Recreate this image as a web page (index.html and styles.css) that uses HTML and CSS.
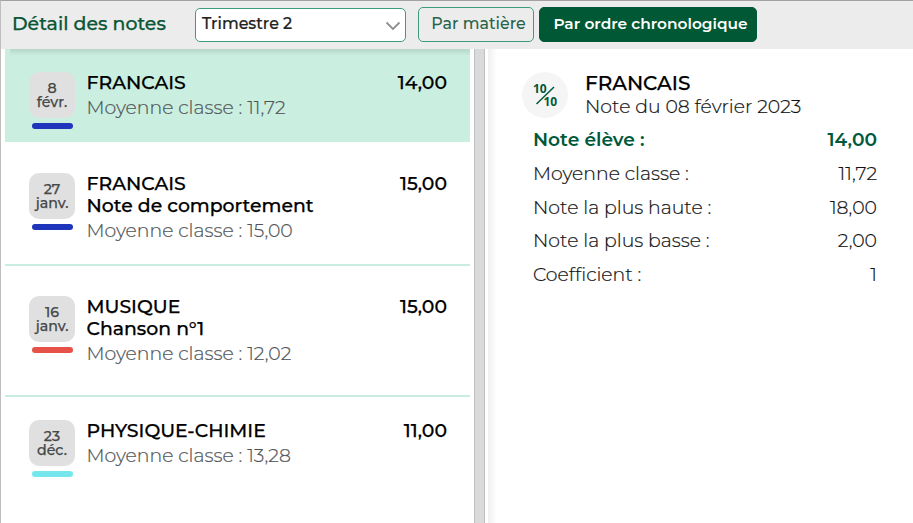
FILE: index.html
```
<!DOCTYPE html>
<html lang="fr">
<head>
<meta charset="utf-8">
<title>Détail des notes</title>
<link rel="stylesheet" href="styles.css">
</head>
<body>
<div class="app">
  <header class="toolbar">
    <h1 class="toolbar-title">Détail des notes</h1>
    <div class="select"><span>Trimestre 2</span>
      <svg class="chevron" width="16" height="10" viewBox="0 0 16 10"><path d="M1.5 1.5 8 8l6.500-6.500" fill="none" stroke="#8f8f8f" stroke-width="1.8"/></svg>
    </div>
    <button class="btn btn-outline">Par matière</button>
    <button class="btn btn-solid">Par ordre chronologique</button>
  </header>
  <main class="content">
    <section class="list">
      <article class="item selected">
        <div class="date"><div class="badge"><span>8</span><span>févr.</span></div><i class="bar blue"></i></div>
        <div class="info"><div class="name">FRANCAIS</div><div class="avg">Moyenne classe : 11,72</div></div>
        <div class="grade">14,00</div>
      </article>
      <article class="item second">
        <div class="date"><div class="badge"><span>27</span><span>janv.</span></div><i class="bar blue"></i></div>
        <div class="info"><div class="name">FRANCAIS</div><div class="name">Note de comportement</div><div class="avg">Moyenne classe : 15,00</div></div>
        <div class="grade">15,00</div>
      </article>
      <article class="item third">
        <div class="date"><div class="badge"><span>16</span><span>janv.</span></div><i class="bar red"></i></div>
        <div class="info"><div class="name">MUSIQUE</div><div class="name">Chanson n°1</div><div class="avg">Moyenne classe : 12,02</div></div>
        <div class="grade">15,00</div>
      </article>
      <article class="item last">
        <div class="date"><div class="badge"><span>23</span><span>déc.</span></div><i class="bar cyan"></i></div>
        <div class="info"><div class="name">PHYSIQUE-CHIMIE</div><div class="avg">Moyenne classe : 13,28</div></div>
        <div class="grade">11,00</div>
      </article>
    </section>
    <div class="splitter"></div>
    <section class="detail">
      <div class="detail-head">
        <svg class="ratio" width="46" height="46" viewBox="0 0 46 46">
          <circle cx="23" cy="23" r="23" fill="#f5f5f5"/>
          <path d="M14.500 32 32 15" stroke="#00593a" stroke-width="1.5"/>
          <text x="11" y="20.500">10</text><text x="21.500" y="34">10</text>
        </svg>
        <div class="detail-text"><h2 class="detail-title">FRANCAIS</h2><div class="detail-date">Note du 08 février 2023</div></div>
      </div>
      <dl class="stats">
        <div class="row strong"><dt>Note élève :</dt><dd>14,00</dd></div>
        <div class="row"><dt>Moyenne classe :</dt><dd>11,72</dd></div>
        <div class="row"><dt>Note la plus haute :</dt><dd>18,00</dd></div>
        <div class="row"><dt>Note la plus basse :</dt><dd>2,00</dd></div>
        <div class="row"><dt>Coefficient :</dt><dd>1</dd></div>
      </dl>
    </section>
  </main>
</div>
</body>
</html>
```
FILE: styles.css
```
* { box-sizing: border-box; }
body { margin: 0; background: #fff; font-family: Montserrat, Inter, "Open Sans", sans-serif; color: #000; white-space: nowrap; font-variant-ligatures: none; }
h1, h2, dl, dd { margin: 0; font-weight: 500; }
.app { width: 913px; height: 523px; border-top: 1px solid #a3a1a3; border-left: 1px solid #bebebe; display: flex; flex-direction: column; overflow: hidden; }
.toolbar { height: 48px; flex: none; background: #ececec; display: flex; align-items: flex-start; padding: 7px 0 0 11px; }
.toolbar-title { width: 183px; font-size: 18.900px; line-height: 32px; color: #0b5636; -webkit-text-stroke: .25px; }
.select { width: 211px; height: 34px; background: #fff; border: 1px solid #3f9c7b; border-radius: 5px; padding: 0 4px 0 6px; display: flex; justify-content: space-between; align-items: center; font-size: 15.850px; font-weight: 500; color: #222; margin-right: 12px; -webkit-text-stroke: .2px; }
.select span { line-height: 30px; margin-top: -2px; }
.chevron { margin-top: 2px; }
.btn { height: 35px; margin-top: -1px; border-radius: 5px; font: 500 15.850px/30px Montserrat, Inter, sans-serif; padding: 0 0 2px; }
.btn-outline { width: 116px; border: 1px solid #3f9c7b; background: transparent; color: #27634a; margin-right: 5px; padding-left: 5px; }
.btn-solid { width: 218px; border: 1px solid #00593a; background: #005934; color: #fff; font-size: 15.400px; font-weight: 600; padding-left: 5px; }
.content { display: flex; flex: 1; min-height: 0; }
.list { width: 465px; margin-left: 4px; flex: none; }
.item { display: flex; padding: 23px 23px 0 24px; }
.selected { height: 93px; background: linear-gradient(rgba(0,0,0,.1), transparent) 5px 0 / 100% 7px no-repeat #caefe0; }
.second { height: 124px; padding-top: 31px; border-bottom: 2px solid #c9eee1; }
.third { height: 131px; padding-top: 30px; border-bottom: 2px solid #c9eee1; }
.date { width: 46px; margin-right: 11px; }
.badge { height: 46px; border-radius: 10px; background: #e0e0e0; display: flex; flex-direction: column; align-items: center; justify-content: center; font-size: 14.200px; line-height: 14px; font-weight: 500; color: #46484a; -webkit-text-stroke: .25px; }
.bar { display: block; width: 41px; height: 6px; border-radius: 3px; margin: 5px 0 0 3px; }
.blue { background: #1f35bb; }
.red { background: #e65247; }
.cyan { background: #75e7ec; }
.info { flex: 1; padding-left: .500px; }
.name { font-size: 18.850px; line-height: 22px; font-weight: 500; -webkit-text-stroke: .25px; }
.avg { font-size: 18.850px; font-weight: 300; line-height: 22px; margin-top: 3px; color: #505458; -webkit-text-stroke: .2px; }
.grade { font-size: 18.850px; line-height: 22px; font-weight: 500; -webkit-text-stroke: .25px; }
.splitter { width: 11px; margin-left: 4px; background: #d8dadc; border: solid #bfc0c1; border-width: 0 1px; flex: none; }
.detail { flex: 1; margin-left: 3px; padding: 23px 36px 0 34px; background: linear-gradient(90deg, #efefef, #fff 9px); }
.detail-head { display: flex; gap: 17px; height: 51px; }
.ratio text { font: 700 12px "Open Sans", sans-serif; fill: #00593a; }
.detail-title { font-size: 20px; line-height: 23px; -webkit-text-stroke: .25px; }
.detail-date { font-size: 18.850px; line-height: 24px; font-weight: 300; color: #111; -webkit-text-stroke: .2px; }
.stats { padding: .400px 0 0 11px; }
.row { display: flex; justify-content: space-between; height: 33.700px; line-height: 34.500px; font-size: 18.850px; font-weight: 300; color: #111; -webkit-text-stroke: .2px; }
.row dd { font-weight: inherit; }
.strong { color: #00593a; font-weight: 600; font-size: 18.650px; -webkit-text-stroke: 0; }
```
